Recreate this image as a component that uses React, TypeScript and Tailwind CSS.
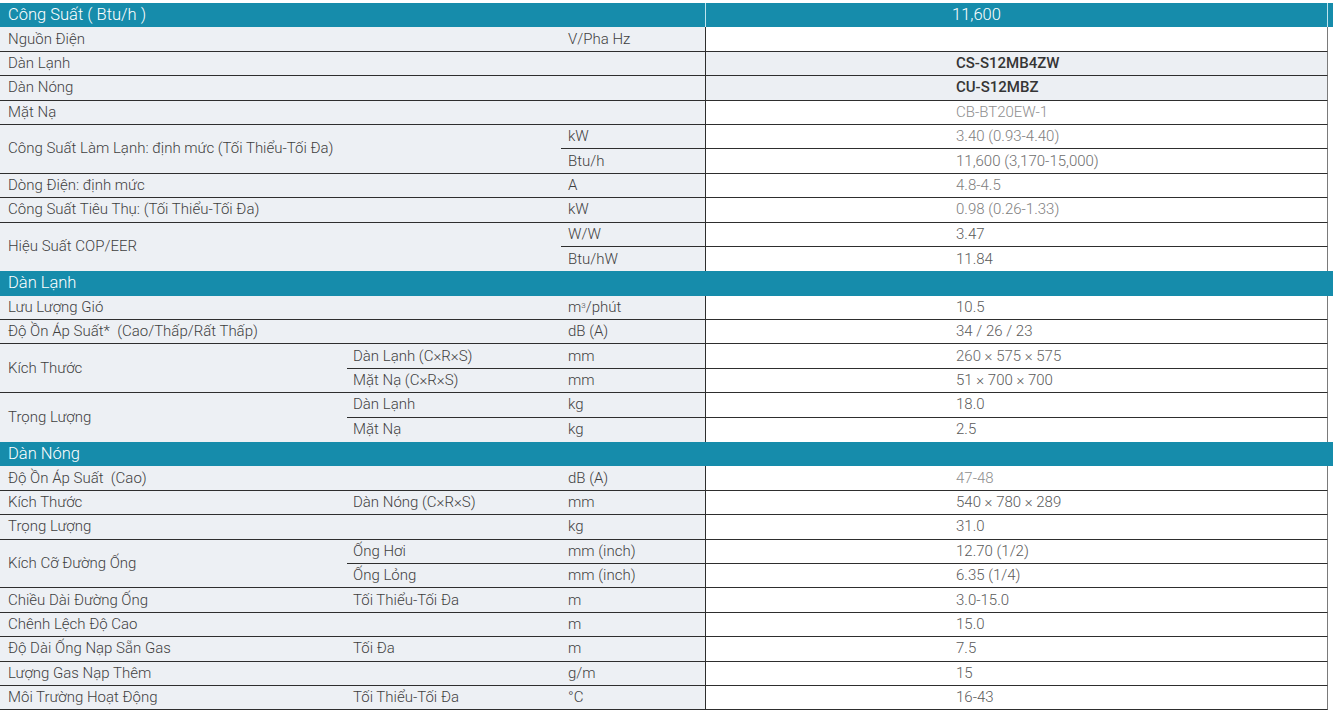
import type { ReactNode } from "react";

type CellProps = {
  children?: ReactNode;
  span?: string;
  line?: boolean;
  className?: string;
};

// left (label) cells: grey background, dark separator
function L({ children, span = "", line = true, className = "pl-2" }: CellProps) {
  return (
    <div
      className={`flex items-center bg-[#edf0f4] text-[#3f3f3f] font-light whitespace-nowrap ${span} ${line ? "border-b border-[#2e2e2e]" : ""} ${className}`}
    >
      <span>{children}</span>
    </div>
  );
}

// value cell of the right column, plus the thin white strip after it
function V({
  children,
  line = true,
  tone = "text-[#5a5a5a] font-light",
  grey = false,
}: {
  children?: ReactNode;
  line?: boolean;
  tone?: string;
  grey?: boolean;
}) {
  return (
    <>
      <div
        className={`flex items-center pl-[250px] whitespace-nowrap border-l border-l-[#2e2e2e] border-r border-r-[#7a7a7a] ${tone} ${grey ? "bg-[#eceff3]" : "bg-white"} ${line ? "border-b border-b-[#2e2e2e]" : ""}`}
      >
        {children}
      </div>
      <div className="bg-white" />
    </>
  );
}

function Section({ title }: { title: string }) {
  return (
    <div className="col-span-5 flex items-center bg-[#168cab] pl-2 text-[16.5px] text-white font-light">
      {title}
    </div>
  );
}

const SUB = "pl-[6px]";
const UNIT = "pl-[7px]";

export default function App() {
  return (
    <div className="min-h-[715px] bg-white pt-[3px] font-['Roboto','Noto_Sans',sans-serif] text-[15px] leading-none">
      <div className="grid w-[1333px] grid-cols-[347px_214px_144px_623px_5px] auto-rows-[24.4px]">
        {/* header */}
        <div className="col-span-3 flex items-center bg-[#168cab] pl-2 text-[16.5px] text-white font-light">
          Công Suất ( Btu/h )
        </div>
        <div className="flex items-center bg-[#168cab] pl-[246px] text-[16.5px] text-white font-light border-l border-l-[#bfe4ee] border-r border-r-[#bfe4ee]">
          11,600
        </div>
        <div className="bg-[#168cab]" />

        <L span="col-span-2">Nguồn Điện</L>
        <L className={UNIT}>V/Pha Hz</L>
        <V />

        <L span="col-span-3">Dàn Lạnh</L>
        <V grey tone="text-[#353535] font-medium">CS-S12MB4ZW</V>

        <L span="col-span-3">Dàn Nóng</L>
        <V grey tone="text-[#353535] font-medium">CU-S12MBZ</V>

        <L span="col-span-3">Mặt Nạ</L>
        <V tone="text-[#8e8e8e] font-light">CB-BT20EW-1</V>

        <L span="col-span-2 row-span-2">Công Suất Làm Lạnh: định mức (Tối Thiểu-Tối Đa)</L>
        <L className={UNIT}>kW</L>
        <V tone="text-[#7e7e7e] font-light">3.40 (0.93-4.40)</V>
        <L className={UNIT}>Btu/h</L>
        <V tone="text-[#6e6e6e] font-light">11,600 (3,170-15,000)</V>

        <L span="col-span-2">Dòng Điện: định mức</L>
        <L className={UNIT}>A</L>
        <V tone="text-[#7e7e7e] font-light">4.8-4.5</V>

        <L span="col-span-2">Công Suất Tiêu Thụ: (Tối Thiểu-Tối Đa)</L>
        <L className={UNIT}>kW</L>
        <V tone="text-[#7e7e7e] font-light">0.98 (0.26-1.33)</V>

        <L span="col-span-2 row-span-2" line={false}>Hiệu Suất COP/EER</L>
        <L className={UNIT}>W/W</L>
        <V>3.47</V>
        <L className={UNIT} line={false}>Btu/hW</L>
        <V line={false}>11.84</V>

        <Section title="Dàn Lạnh" />

        <L span="col-span-2">Lưu Lượng Gió</L>
        <L className={UNIT}>
          m<sup className="relative -top-[4px] text-[8px] leading-none">3</sup>/phút
        </L>
        <V>10.5</V>

        <L span="col-span-2">Độ Ồn Áp Suất*&nbsp;&nbsp;(Cao/Thấp/Rất Thấp)</L>
        <L className={UNIT}>dB (A)</L>
        <V>34 / 26 / 23</V>

        <L span="row-span-2">Kích Thước</L>
        <L className={SUB}>Dàn Lạnh (C×R×S)</L>
        <L className={UNIT}>mm</L>
        <V tone="text-[#666] font-light">260 × 575 × 575</V>
        <L className={SUB}>Mặt Nạ (C×R×S)</L>
        <L className={UNIT}>mm</L>
        <V>51 × 700 × 700</V>

        <L span="row-span-2" line={false}>Trọng Lượng</L>
        <L className={SUB}>Dàn Lạnh</L>
        <L className={UNIT}>kg</L>
        <V>18.0</V>
        <L className={SUB} line={false}>Mặt Nạ</L>
        <L className={UNIT} line={false}>kg</L>
        <V line={false}>2.5</V>

        <Section title="Dàn Nóng" />

        <L span="col-span-2">Độ Ồn Áp Suất&nbsp;&nbsp;(Cao)</L>
        <L className={UNIT}>dB (A)</L>
        <V tone="text-[#8e8e8e] font-light">47-48</V>

        <L>Kích Thước</L>
        <L className={SUB}>Dàn Nóng (C×R×S)</L>
        <L className={UNIT}>mm</L>
        <V>540 × 780 × 289</V>

        <L span="col-span-2">Trọng Lượng</L>
        <L className={UNIT}>kg</L>
        <V>31.0</V>

        <L span="row-span-2">Kích Cỡ Đường Ống</L>
        <L className={SUB}>Ống Hơi</L>
        <L className={UNIT}>mm (inch)</L>
        <V>12.70 (1/2)</V>
        <L className={SUB}>Ống Lỏng</L>
        <L className={UNIT}>mm (inch)</L>
        <V>6.35 (1/4)</V>

        <L>Chiều Dài Đường Ống</L>
        <L className={SUB}>Tối Thiểu-Tối Đa</L>
        <L className={UNIT}>m</L>
        <V>3.0-15.0</V>

        <L span="col-span-2">Chênh Lệch Độ Cao</L>
        <L className={UNIT}>m</L>
        <V>15.0</V>

        <L>Độ Dài Ống Nạp Sẵn Gas</L>
        <L className={SUB}>Tối Đa</L>
        <L className={UNIT}>m</L>
        <V>7.5</V>

        <L span="col-span-2">Lượng Gas Nạp Thêm</L>
        <L className={UNIT}>g/m</L>
        <V>15</V>

        <L>Môi Trường Hoạt Động</L>
        <L className={SUB}>Tối Thiểu-Tối Đa</L>
        <L className={UNIT}>°C</L>
        <V>16-43</V>
      </div>
    </div>
  );
}
